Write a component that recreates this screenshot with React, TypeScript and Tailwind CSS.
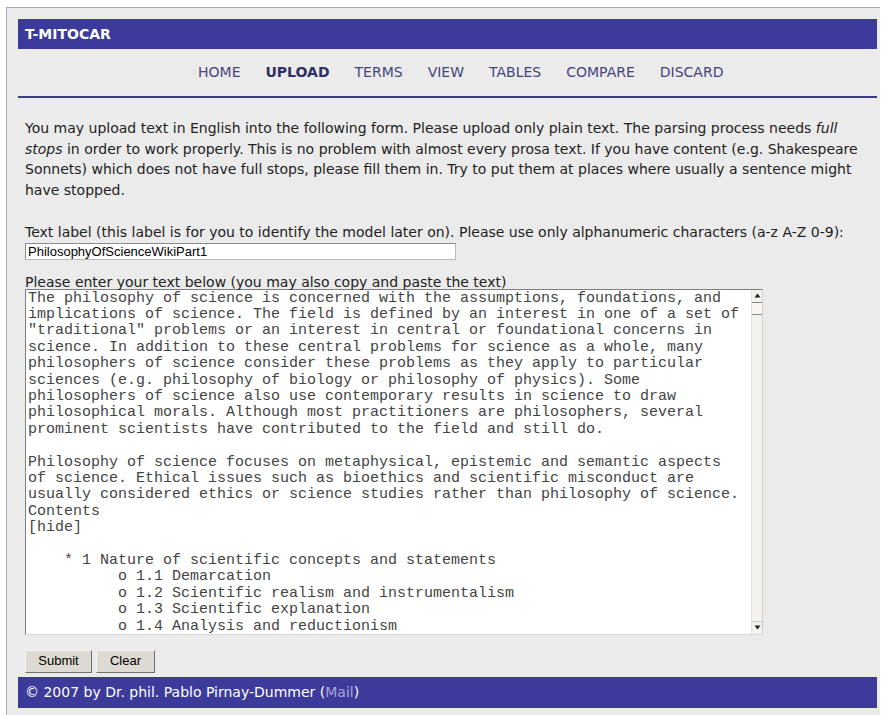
import React from "react";

const NAV = ["HOME", "UPLOAD", "TERMS", "VIEW", "TABLES", "COMPARE", "DISCARD"];

const SAMPLE = `The philosophy of science is concerned with the assumptions, foundations, and
implications of science. The field is defined by an interest in one of a set of
"traditional" problems or an interest in central or foundational concerns in
science. In addition to these central problems for science as a whole, many
philosophers of science consider these problems as they apply to particular
sciences (e.g. philosophy of biology or philosophy of physics). Some
philosophers of science also use contemporary results in science to draw
philosophical morals. Although most practitioners are philosophers, several
prominent scientists have contributed to the field and still do.

Philosophy of science focuses on metaphysical, epistemic and semantic aspects
of science. Ethical issues such as bioethics and scientific misconduct are
usually considered ethics or science studies rather than philosophy of science.
Contents
[hide]

    * 1 Nature of scientific concepts and statements
          o 1.1 Demarcation
          o 1.2 Scientific realism and instrumentalism
          o 1.3 Scientific explanation
          o 1.4 Analysis and reductionism
          o 1.5 Grounds of validity of scientific reasoning`;

const ScrollBar = () => {
  return (
    <div className="flex w-[11px] flex-col bg-[#f3f2ec] border-l border-[#e2e1da]">
      <div className="flex h-[13px] items-center justify-center border-b border-[#8a8a8a] bg-[#f3f2ec]">
        <svg width="7" height="5" viewBox="0 0 7 5">
          <path d="M3.5 0.5 L6.5 4.5 L0.5 4.5 Z" fill="#222" />
        </svg>
      </div>
      <div className="h-[12px] border-b border-[#8a8a8a] bg-[#f6f5f0]" />
      <div className="grow" />
      <div className="flex h-[13px] items-center justify-center border-t border-[#c8c8c8] bg-[#f3f2ec]">
        <svg width="7" height="5" viewBox="0 0 7 5">
          <path d="M0.5 0.5 L6.5 0.5 L3.5 4.5 Z" fill="#222" />
        </svg>
      </div>
    </div>
  );
};

const App = () => {
  return (
    <div className="min-h-screen bg-white pl-[6px] pt-[7px] font-['DejaVu_Sans',sans-serif] text-[#222]">
      <div className="w-[874px] border-l border-t border-[#a9adbd] bg-[#ebebeb] pl-[11px] pr-[3px] pt-[11px] pb-[8px]">
        <div className="flex h-[30px] items-center bg-[#3c3a9a] px-[7px] text-[14px] font-bold text-white">
          T-MITOCAR
        </div>

        <div className="flex h-[47px] items-center gap-x-[25px] pl-[180px] text-[14px] text-[#45457a]">
          {NAV.map((item) => (
            <span
              key={item}
              className={item === "UPLOAD" ? "font-bold text-[#2f2f63]" : ""}
            >
              {item}
            </span>
          ))}
        </div>
        <div className="h-[2px] bg-[#3b3a86]" />

        <div className="px-[7px] pt-[20px] text-[14px] leading-[20.5px]">
          <p>
            You may upload text in English into the following form. Please
            upload only plain text. The parsing process needs <i>full stops</i>{" "}
            in order to work properly. This is no problem with almost every
            prosa text. If you have content (e.g. Shakespeare Sonnets) which
            does not have full stops, please fill them in. Try to put them at
            places where usually a sentence might have stopped.
          </p>

          <p className="mt-[22px]">
            Text label (this label is for you to identify the model later on).
            Please use only alphanumeric characters (a-z A-Z 0-9):
          </p>
          <div className="flex h-[17px] w-[431px] items-center border border-[#b8b8b8] border-t-[#8c8c8c] border-l-[#8c8c8c] bg-white px-[2px] font-['Liberation_Sans',sans-serif] text-[13px] leading-none text-black">
            PhilosophyOfScienceWikiPart1
          </div>

          <p className="mt-[15px] leading-[14px]">
            Please enter your text below (you may also copy and paste the text)
          </p>
          <div className="flex h-[346px] w-[738px] border border-[#7f7f7f] border-r-[#d0d0d0] border-b-[#d8d8d8] bg-white">
            <div className="grow overflow-hidden whitespace-pre px-[2px] pt-[1px] font-['Liberation_Mono',monospace] text-[15px] leading-[16.4px] text-[#444]">
              {SAMPLE}
            </div>
            <ScrollBar />
          </div>

          <div className="mt-[15px] flex gap-x-[4px] font-['Liberation_Sans',sans-serif] text-[13px] text-black">
            <button className="h-[23px] w-[67px] border border-[#f4f4f4] border-r-[#6f6f6f] border-b-[#6f6f6f] bg-[#dcdad2]">
              Submit
            </button>
            <button className="h-[23px] w-[59px] border border-[#f4f4f4] border-r-[#6f6f6f] border-b-[#6f6f6f] bg-[#dcdad2]">
              Clear
            </button>
          </div>
        </div>

        <div className="mt-[4px] flex h-[31px] items-center bg-[#3c3a9a] px-[7px] text-[14px] text-white">
          © 2007 by Dr. phil. Pablo Pirnay-Dummer (
          <a className="text-[#a9a6dc]" href="#">
            Mail
          </a>
          )
        </div>
      </div>
    </div>
  );
};

export default App;
